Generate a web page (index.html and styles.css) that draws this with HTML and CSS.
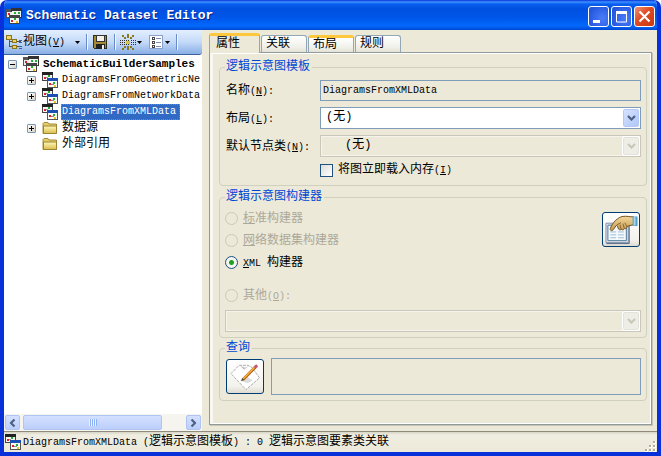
FILE: index.html
```html
<!DOCTYPE html>
<html lang="zh-CN">
<head>
<meta charset="utf-8">
<title>Schematic Dataset Editor</title>
<link rel="stylesheet" href="styles.css">
</head>
<body>
<svg class="defs" aria-hidden="true">
  <defs>
    <linearGradient id="folder-fill" x1="0" y1="0" x2="0" y2="1"><stop offset="0" stop-color="#fff6b8"/><stop offset="1" stop-color="#d9bd4c"/></linearGradient>
    <linearGradient id="hand-fill" x1="0" y1="0" x2="0" y2="1"><stop offset="0" stop-color="#f3d79a"/><stop offset="1" stop-color="#c49a50"/></linearGradient>
  </defs>
  <symbol id="diagram" viewBox="0 0 16 16" shape-rendering="crispEdges">
    <path d="M0 0h11v9H0z" fill="#444"/><path d="M0 0h11v3H0z" fill="#222"/><path d="M1 3h9v5H1z" fill="#f4f6f2"/>
    <path d="M2 5h2v2H2z" fill="#e02020"/><path d="M6 3h2v2H6z" fill="#20b030"/><path d="M4 5h2v1H4z" fill="#999"/>
    <path d="M5 6h11v10H5z" fill="#555"/><path d="M5 6h11v3H5z" fill="#1c4fb4"/><path d="M6 9h9v6H6z" fill="#f8faf6"/>
    <path d="M7 11h2v2H7z" fill="#e02020"/><path d="M11 10h2v2h-2z" fill="#20b030"/><path d="M12 13h2v2h-2z" fill="#e8c820"/><path d="M9 12h3v1H9z" fill="#888"/>
  </symbol>
  <symbol id="dataset" viewBox="0 0 16 16" shape-rendering="crispEdges">
    <path d="M0 1h11v9H0z" fill="#555"/><path d="M5 0h11v10H5z" fill="#333"/><path d="M1 4h9v5H1z" fill="#eee"/><path d="M6 3h9v6H6z" fill="#f4f4f4"/>
    <path d="M2 5h2v2H2z" fill="#e02020"/><path d="M8 4h2v2H8zM12 4h2v2h-2z" fill="#20b030"/>
    <path d="M3 7h11v9H3z" fill="#444"/><path d="M4 10h9v5H4z" fill="#f4f4f0"/><path d="M5 12h2v2H5z" fill="#e02020"/><path d="M8 10h2v2H8z" fill="#20b030"/><path d="M10 13h2v2h-2z" fill="#e8b820"/>
  </symbol>
  <symbol id="folder" viewBox="0 0 16 16"><path d="M1 13.500V3.500l1-1h4l1 1.500h7.500v9.500z" fill="#e5cd69" stroke="#a08a38"/><path d="M1.500 6h13v7.500h-13z" fill="url(#folder-fill)" stroke="#9c8532"/></symbol>
  <symbol id="chevron" viewBox="0 0 9 6"><path d="M1 1l3.500 3.500L8 1" fill="none" stroke="currentColor" stroke-width="2.200"/></symbol>
  <symbol id="caret" viewBox="0 0 5 3"><path d="M0 0h5L2.500 3z"/></symbol>
</svg>

<div class="window">
  <header class="title-bar">
    <svg class="icon"><use href="#dataset"/></svg>
    <h1>Schematic Dataset Editor</h1>
    <div class="window-buttons">
      <button type="button" aria-label="最小化"><svg viewBox="0 0 19 19"><path d="M4 13h7v3H4z" fill="#fff"/></svg></button>
      <button type="button" aria-label="最大化"><svg viewBox="0 0 19 19"><path d="M4.500 4v11h10V4" fill="none" stroke="#fff"/><path d="M4 4h11v3H4z" fill="#fff"/></svg></button>
      <button type="button" class="close" aria-label="关闭"><svg viewBox="0 0 19 19"><path d="M4.500 4.500l10 10m0-10l-10 10" stroke="#fff" stroke-width="2.200"/></svg></button>
    </div>
  </header>

  <main class="main">
    <section class="sidebar">
      <div class="toolbar">
        <button type="button" class="tool view">
          <svg class="icon" viewBox="0 0 16 16" shape-rendering="crispEdges"><path d="M3 5v7h5M3 7h5M10 7h5M10 12h5" fill="none" stroke="#555"/><path d="M0 1h6v5H0zM6 5h5v4H6zM6 11h5v4H6z" fill="#8a741c"/><path d="M1 2h4v3H1zM7 6h3v2H7zM7 12h3v2H7z" fill="#ecd468"/><path d="M13 6h3v1h-3zM13 8h3v1h-3zM13 12h3v1h-3zM13 14h3v1h-3z" fill="#3b62a8"/></svg>
          <span>视图<span class="en">(<u>V</u>)</span></span>
          <svg class="caret"><use href="#caret"/></svg>
        </button>
        <i class="separator"></i>
        <button type="button" class="tool save" aria-label="保存">
          <svg class="icon" viewBox="0 0 16 16" shape-rendering="crispEdges"><path d="M1 1h14v14H2l-1-1z" fill="#333018"/><path d="M2 2h12v12H2z" fill="#a48a35"/><path d="M4 1h9v7H4z" fill="#333"/><path d="M5 2h7v5H5z" fill="#f2f0e8"/><path d="M4 10h9v5H4z" fill="#222"/><path d="M10 11h2v4h-2z" fill="#eee"/></svg>
        </button>
        <i class="separator"></i>
        <button type="button" class="tool layout" aria-label="布局">
          <svg class="icon" viewBox="0 0 16 16" shape-rendering="crispEdges"><path d="M0 6.500h5M11 6.500h5M0 8.500h5M11 8.500h5M0 10.500h5M11 10.500h5M6 6.500h4M6 10.500h4" stroke="#333" stroke-dasharray="1 1"/><path d="M2 1h2v2H2zM4 3h2v2H4zM12 1h2v2h-2zM10 3h2v2h-2zM7 0h2v4H7zM2 14h2v2H2zM4 12h2v2H4zM12 14h2v2h-2zM10 12h2v2h-2zM7 12h2v4H7z" fill="#8b7920"/><path d="M6 7h4v3H6z" fill="#d8c24a"/></svg>
          <svg class="caret"><use href="#caret"/></svg>
        </button>
        <button type="button" class="tool list" aria-label="列表">
          <svg class="icon" viewBox="0 0 16 16" shape-rendering="crispEdges"><path d="M1 1h14v14H1z" fill="#8ba0c8"/><path d="M2 2h12v12H2z" fill="#fff"/><path d="M4 3h3v3H4zM4 7h3v3H4zM4 11h3v3H4z" fill="#444"/><path d="M5 4h1v1H5zM5 8h1v1H5zM5 12h1v1H5z" fill="#fff"/><path d="M8 4h5v1H8zM8 8h5v1H8zM8 12h5v1H8z" fill="#7b90b8"/></svg>
          <svg class="caret"><use href="#caret"/></svg>
        </button>
        <i class="separator"></i>
      </div>
      <ul class="tree">
        <li class="root"><button type="button" class="toggle open" aria-label="折叠"></button><svg class="icon"><use href="#dataset"/></svg><span class="label">SchematicBuilderSamples</span></li>
        <li><button type="button" class="toggle" aria-label="展开"></button><svg class="icon"><use href="#diagram"/></svg><span class="label en">DiagramsFromGeometricNe</span></li>
        <li><button type="button" class="toggle" aria-label="展开"></button><svg class="icon"><use href="#diagram"/></svg><span class="label en">DiagramsFromNetworkData</span></li>
        <li><i class="no-toggle"></i><svg class="icon"><use href="#diagram"/></svg><span class="label en selected">DiagramsFromXMLData</span></li>
        <li><button type="button" class="toggle" aria-label="展开"></button><svg class="icon"><use href="#folder"/></svg><span class="label">数据源</span></li>
        <li><i class="no-toggle"></i><svg class="icon"><use href="#folder"/></svg><span class="label">外部引用</span></li>
      </ul>
      <div class="scrollbar">
        <button type="button" class="arrow left" aria-label="向左"><svg><use href="#chevron"/></svg></button>
        <div class="track"><div class="thumb"><i></i></div></div>
        <button type="button" class="arrow right" aria-label="向右"><svg><use href="#chevron"/></svg></button>
      </div>
    </section>

    <section class="editor">
      <div class="tabs" role="tablist">
        <button type="button" role="tab" aria-selected="true" class="tab active">属性</button>
        <button type="button" role="tab" class="tab">关联</button>
        <button type="button" role="tab" class="tab hot">布局</button>
        <button type="button" role="tab" class="tab">规则</button>
      </div>
      <form class="page">
        <fieldset class="template">
          <legend>逻辑示意图模板</legend>
          <div class="fields">
            <label for="name">名称<span class="en">(<u>N</u>):</span></label>
            <input class="text en" id="name" type="text" value="DiagramsFromXMLData" readonly>
            <label for="layout">布局<span class="en">(<u>L</u>):</span></label>
            <div class="combo"><select id="layout"><option>(无)</option></select><span class="drop"><svg><use href="#chevron"/></svg></span></div>
            <label for="node">默认节点类<span class="en">(<u>N</u>):</span></label>
            <div class="combo disabled indented"><select id="node" disabled><option>(无)</option></select><span class="drop"><svg><use href="#chevron"/></svg></span></div>
            <label class="check"><input type="checkbox"><span>将图立即载入内存<span class="en">(<u>I</u>)</span></span></label>
          </div>
        </fieldset>
        <fieldset class="builder">
          <legend>逻辑示意图构建器</legend>
          <div class="builder-body">
            <div class="radios">
              <label class="off"><input type="radio" name="builder" disabled><span><u>标</u>准构建器</span></label>
              <label class="off"><input type="radio" name="builder" disabled><span><u>网</u>络数据集构建器</span></label>
              <label><input type="radio" name="builder" checked><span><span class="en"><u>X</u>ML </span>构建器</span></label>
              <label class="off other"><input type="radio" name="builder" disabled><span>其他<span class="en">(<u>O</u>):</span></span></label>
            </div>
            <button type="button" class="action props" aria-label="构建器属性">
              <svg viewBox="0 0 36 34">
                <path d="M2.500 10.500h23v20h-23z" fill="#dfe7f0" stroke="#7f8da8"/><path d="M4.500 12.500h19v16h-19z" fill="#f4f8fc" stroke="#4c7794"/><path d="M26.500 11v20.500H3" fill="none" stroke="#566b8b"/>
                <path d="M7 19.500h6M15 19.500h6M7 22.500h6M15 22.500h6M7 25.500h6M15 25.500h6" stroke="#9dbdd8"/>
                <path d="M31 4c-4 0-7-1-11-.5-3 .4-5 2-7.500 4C10 10 8 13 7 16c-.6 2 1.600 3 3 1.200l3-4.200c1-.6 1.400.5 2 2.500.5 2 2.300 2.400 3.200 1.200 1.400 1.300 3 .5 3.300-.7 1.700.8 2.700-.6 2.500-2.200L31 12z" fill="url(#hand-fill)" stroke="#70501e"/>
                <path d="M14 12l4-2M18 17l-1-5M21.500 16l-1.500-5M24 14l-2-4" fill="none" stroke="#8b672d"/><path d="M30 3.500h5v10h-5z" fill="#4e9fcb"/><path d="M31 4h2v9h-2z" fill="#a7d5eb"/>
              </svg>
            </button>
          </div>
          <div class="combo disabled"><select aria-label="其他" disabled><option></option></select><span class="drop"><svg><use href="#chevron"/></svg></span></div>
        </fieldset>
        <fieldset class="query">
          <legend>查询</legend>
          <div class="query-body">
            <button type="button" class="action" aria-label="编辑查询">
              <svg viewBox="0 0 36 34">
                <path d="M12 5.500h9l4 2 8 11L19 30.500 3.500 14z" fill="#fff" stroke="#aaa" stroke-dasharray="3 1"/><path d="M13 6l4 4 5-4-4 2z" fill="#bbb"/><path d="M13 21l8 3 5-3-6-4z" fill="#ddd"/>
                <path d="M16 20L29 7" stroke="#a65b16" stroke-width="3"/><path d="M16 19.500L28.500 7" stroke="#ffb637" stroke-width="1.500"/><path d="M14 22l1-3.500 2.500 2z" fill="#584c3d"/><path d="M28 8l2.500-2.500" stroke="#c55370" stroke-width="3"/>
              </svg>
            </button>
            <textarea aria-label="查询" readonly></textarea>
          </div>
        </fieldset>
      </form>
    </section>
  </main>

  <footer class="status">
    <svg class="icon"><use href="#diagram"/></svg>
    <span><span class="en">DiagramsFromXMLData (</span>逻辑示意图模板<span class="en">) : 0 </span>逻辑示意图要素类关联</span>
    <svg class="grip" viewBox="0 0 12 12" shape-rendering="crispEdges"><path d="M9 1h3v3H9zM5 5h3v3H5zM9 5h3v3H9zM1 9h3v3H1zM5 9h3v3H5zM9 9h3v3H9z" fill="#fff"/><path d="M9 1h2v2H9zM5 5h2v2H5zM9 5h2v2H9zM1 9h2v2H1zM5 9h2v2H5zM9 9h2v2H9z" fill="#b1ad98"/></svg>
  </footer>
</div>
</body>
</html>
```
FILE: styles.css
```css
* { box-sizing: border-box; }

body {
  margin: 0;
  background: #fff;
  color: #000;
  font: 12px/16px "Liberation Mono", "Noto Sans CJK SC", monospace;
}

button, input, select, textarea { font: inherit; color: inherit; margin: 0; padding: 0; }
button { border: 0; background: none; }
svg { display: block; flex: none; }
.defs { position: absolute; width: 0; height: 0; }
.en { font-size: 10px; }
.icon { width: 16px; height: 16px; }

.window {
  display: flex;
  flex-direction: column;
  min-height: 100vh;
  border: solid #0831d9;
  border-width: 0 4px 4px;
  border-radius: 7px 7px 0 0;
  background: #ece9d8;
  overflow: hidden;
}

.title-bar {
  display: flex;
  align-items: center;
  gap: 4px;
  height: 30px;
  padding: 2px 2px 0;
  background: linear-gradient(#0831d9 0, #3c92ff 2px, #0a5ff0 4px, #0050e0 9px, #0057ea 18px, #0368fd 26px, #0048d0 30px);
}
.title-bar h1 {
  flex: 1;
  margin: 0;
  color: #fff;
  font-size: 13px;
  line-height: 16px;
  text-shadow: 1px 1px #0a1883;
}
.window-buttons { display: flex; gap: 2px; }
.window-buttons button {
  width: 21px;
  height: 21px;
  border: 1px solid #fff;
  border-radius: 3px;
  background: radial-gradient(circle at 70% 60%, #4a7dfa, #2456dc 80%);
}
.window-buttons .close { background: linear-gradient(135deg, #ee9275, #df4a22 45%, #c93810); }

.main { display: flex; flex: 1; }

.sidebar {
  display: flex;
  flex-direction: column;
  flex: 0 0 198px;
  background: #fff;
}
.toolbar {
  display: flex;
  align-items: center;
  height: 25px;
  padding: 0 2px;
  border-bottom: 1px solid #3b619c;
  border-radius: 0 0 3px 0;
  background: linear-gradient(#e3efff, #c4daf9 50%, #88aee4);
}
.tool { display: flex; align-items: center; gap: 1px; height: 22px; }
.view span { padding-top: 1px; }
.view span span { padding: 0; }
.caret { width: 5px; height: 3px; }
.view .caret { margin-left: 9px; }
.list { margin-left: 6px; }
.separator { width: 2px; height: 16px; margin: 0 4px 0 6px; border-left: 1px solid #6a8ccb; border-right: 1px solid #f1f9ff; }

.tree { flex: 1; margin: 0; padding: 1px 0 0 4px; list-style: none; overflow: hidden; }
.tree li { display: flex; align-items: center; height: 16px; padding-left: 19px; }
.tree .root { padding-left: 0; }
.tree .label { margin-left: 3px; padding: 0 1px; white-space: nowrap; }
.tree .root .label { font-size: 11px; font-weight: bold; }
.tree .selected {
  padding-right: 4px;
  outline: 1px dotted #c07a30;
  outline-offset: -1px;
  background: #316ac5;
  color: #fff;
}
.toggle, .no-toggle { flex: none; width: 9px; height: 9px; margin-right: 6px; }
.toggle {
  border: 1px solid #7898b5;
  border-radius: 1px;
  background:
    linear-gradient(#000, #000) center / 5px 1px no-repeat,
    linear-gradient(#000, #000) center / 1px 5px no-repeat,
    linear-gradient(135deg, #fff, #d8d2c4);
}
.toggle.open {
  background:
    linear-gradient(#000, #000) center / 5px 1px no-repeat,
    linear-gradient(135deg, #fff, #d8d2c4);
}

.scrollbar { display: flex; height: 17px; padding: 1px; background: #f5f4ee; }
.arrow, .thumb { border: 1px solid #b0c4f4; border-radius: 2px; background: linear-gradient(#d4e0ff, #bccffb); }
.arrow { display: grid; place-items: center; width: 15px; height: 15px; color: #4d6185; }
.arrow svg, .drop svg { width: 9px; height: 6px; }
.left svg { transform: rotate(90deg); }
.right svg { transform: rotate(-90deg); }
.track { flex: 1; padding: 0 3px; }
.thumb { display: grid; place-items: center; width: 87%; height: 15px; }
.thumb i { width: 8px; height: 7px; background: repeating-linear-gradient(90deg, #eef4fe 0 1px, #8cb0f8 1px 2px); }

.editor { display: flex; flex: 1; flex-direction: column; min-width: 0; padding: 3px 5px 6px 7px; }
.tabs { display: flex; align-items: flex-end; gap: 1px; height: 19px; padding-right: 2px; }
.tab {
  width: 46px;
  height: 17px;
  padding: 0 8px 0 4px;
  border: 1px solid #91a7b4;
  border-bottom: 0;
  border-radius: 3px 3px 0 0;
  background: linear-gradient(#fff, #f0f0ea 70%, #e4e2d4);
  text-align: left;
}
.tab.hot, .tab.active { border-top: 3px solid #ffc73c; line-height: 13px; }
.tab.active {
  z-index: 1;
  width: 51px;
  height: 20px;
  margin-bottom: -1px;
  padding-left: 6px;
  background: #ece9d8;
}
.page {
  flex: 1;
  padding: 7px 4px 0 9px;
  border: 1px solid #919b9c;
  box-shadow: inset 3px 0 #f8f7f1, inset -1px -1px #fff, inset 0 1px #fff, 1px 1px #c8c5b5;
}

fieldset { min-width: 0; margin: 0; padding: 3px 5px 5px; border: 1px solid #d0d0bf; border-radius: 4px; }
legend { padding: 0 2px 0 1px; color: #0046d5; line-height: 14px; }
.template { padding: 6px 5px 7px; }
.builder { margin-top: 4px; }
.query { margin-top: 3px; }

.fields { display: grid; grid-template-columns: 95px 1fr; gap: 6px 0; align-items: center; }
.fields > label { padding: 2px 0 0 1px; white-space: nowrap; }
.text, textarea { width: 100%; border: 1px solid #7f9db9; border-radius: 0; background: transparent; outline: 0; }
.text { height: 21px; padding: 0 2px 1px; }
.fields .check { display: flex; grid-column: 2; align-items: center; padding: 0; height: 15px; }

.combo { position: relative; height: 22px; border: 1px solid #7f9db9; background: #fff; }
.combo select { display: block; width: 100%; height: 20px; padding: 0 22px 3px 5px; border: 0; appearance: none; background: transparent; opacity: 1; }
.combo.indented select { padding-left: 24px; }
.combo.disabled { border-color: #c9c7ba; background: #ece9d8; box-shadow: inset 0 0 0 1px #f5f3ea; }
.drop {
  position: absolute;
  top: 1px;
  right: 1px;
  display: grid;
  place-items: center;
  width: 16px;
  height: 18px;
  border: 1px solid #b5c8f7;
  border-radius: 2px;
  background: linear-gradient(135deg, #d6e2ff, #afc7f8);
  color: #4d6185;
  pointer-events: none;
}
.disabled .drop { border-color: #e3e2da; background: #efeee6; box-shadow: 0 0 0 1px #fff; color: #c9c7ba; }

input[type="checkbox"], input[type="radio"] {
  flex: none;
  width: 13px;
  height: 13px;
  margin-right: 5px;
  border: 1px solid #1c5180;
  appearance: none;
  background: linear-gradient(135deg, #dcdcd7, #fff);
}
input[type="radio"] { border-radius: 50%; }
input[type="radio"]:checked { background: radial-gradient(circle, #21a121 0 2px, #f4f4f0 3px); }
input[type="radio"]:disabled { border-color: #cac8bb; background: #ece9d8; }

.builder-body { display: flex; justify-content: space-between; }
.radios label { display: flex; align-items: center; height: 22px; }
.radios label > span { padding-top: 2px; }
.radios .other { margin-top: 11px; }
.off { color: #aca899; }
.builder .combo { margin-top: 4px; }
.action {
  flex: none;
  width: 38px;
  height: 35px;
  border: 1px solid #003c74;
  border-radius: 3px;
  background: linear-gradient(#fff, #f3f2ec 80%, #dedbd0);
}
.action svg { width: 36px; height: 33px; }
.props { margin: 5px 1px 0 0; }
.query-body { display: flex; gap: 7px; align-items: center; padding-left: 1px; }
.query textarea { display: block; flex: 1; height: 37px; resize: none; }

.status {
  display: flex;
  align-items: center;
  gap: 2px;
  height: 21px;
  padding: 0 1px;
  border-top: 1px solid #8e8b7e;
  background: linear-gradient(#d8d5c6, #f0eee2 3px, #ece9d8);
  white-space: nowrap;
}
.grip { align-self: flex-end; width: 12px; height: 12px; margin-left: auto; }
```
